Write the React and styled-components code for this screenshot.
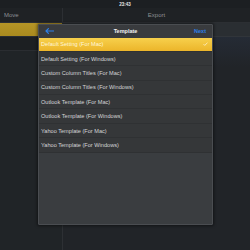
import React from 'react';
import styled, { createGlobalStyle } from 'styled-components';

const templates = [
  'Default Setting (For Mac)',
  'Default Setting (For Windows)',
  'Custom Column Titles (For Mac)',
  'Custom Column Titles (For Windows)',
  'Outlook Template (For Mac)',
  'Outlook Template (For Windows)',
  'Yahoo Template (For Mac)',
  'Yahoo Template (For Windows)',
];

function App() {
  return (
    <>
      <GlobalStyle />
      <Screen>
        <StatusBar>23:43</StatusBar>
        <TopNav>
          <NavCell>Move</NavCell>
          <NavCell center>Export</NavCell>
        </TopNav>
        <Body>
          <Sidebar>
            <SideItem active />
            <SideItem />
          </Sidebar>
          <Pane>
            <PaneBand />
            <PaneGlow />
          </Pane>
        </Body>

        <Modal>
          <ModalHeader>
            <BackButton>
              <svg width="9" height="6" viewBox="0 0 9 6">
                <path d="M8.5 3H1M3.4 0.6L1 3l2.4 2.4" stroke="#2d7fe6" strokeWidth="1.2" fill="none" strokeLinecap="round" strokeLinejoin="round" />
              </svg>
            </BackButton>
            <Title>Template</Title>
            <NextButton>Next</NextButton>
          </ModalHeader>
          <List>
            {templates.map((t, i) => (
              <Row key={t} selected={i === 0}>
                <span>{t}</span>
                {i === 0 && (
                  <svg width="5" height="4" viewBox="0 0 5 4">
                    <path d="M0.5 2.1l1.3 1.3L4.5 0.6" stroke="rgba(255,255,255,0.75)" strokeWidth="0.8" fill="none" />
                  </svg>
                )}
              </Row>
            ))}
          </List>
        </Modal>
      </Screen>
    </>
  );
}

const GlobalStyle = createGlobalStyle`
  html, body {
    margin: 0;
    padding: 0;
    background: #202326;
  }
  body {
    font-family: "Liberation Sans", Arial, sans-serif;
  }
`;

const Screen = styled.div`
  position: relative;
  width: 250px;
  height: 250px;
  overflow: hidden;
  background: #202326;
  display: flex;
  flex-direction: column;
`;

const StatusBar = styled.div`
  height: 8px;
  display: flex;
  align-items: center;
  justify-content: center;
  font-size: 4.5px;
  font-weight: bold;
  color: #e8e8e8;
  background: #1c1f22;
`;

const TopNav = styled.div`
  height: 14px;
  display: grid;
  grid-template-columns: 63px 1fr;
  background: #1f2225;
  border-bottom: 1px solid #2c2f33;
`;

const NavCell = styled.div`
  display: flex;
  align-items: center;
  justify-content: ${(p) => (p.center ? 'center' : 'flex-start')};
  padding-left: ${(p) => (p.center ? '0' : '4px')};
  font-size: 6px;
  color: #8d9094;
  border-right: ${(p) => (p.center ? 'none' : '1px solid #2c2f33')};
`;

const Body = styled.div`
  flex: 1;
  display: grid;
  grid-template-columns: 63px 1fr;
`;

const Sidebar = styled.div`
  display: flex;
  flex-direction: column;
  background: #202427;
  border-right: 1px solid #2d3034;
`;

const SideItem = styled.div`
  height: 13px;
  background: ${(p) => (p.active ? 'linear-gradient(#b59526, #a98a1f)' : '#1c1f22')};
  border-bottom: 1px solid #2a2d31;
`;

const Pane = styled.div`
  display: flex;
  flex-direction: column;
  background: #212428;
`;

const PaneBand = styled.div`
  height: 13px;
  background: #2a2e32;
  border-bottom: 1px solid #31353a;
`;

const PaneGlow = styled.div`
  height: 30px;
  background: linear-gradient(#252b35, #212428);
`;

const Modal = styled.div`
  position: absolute;
  left: 38px;
  top: 24px;
  width: 175px;
  height: 201px;
  background: #3a3d40;
  border: 1px solid #4a4d51;
  border-radius: 1px;
  box-sizing: border-box;
  box-shadow: 0 0 3px 1px rgba(0, 0, 0, 0.45);
  display: flex;
  flex-direction: column;
  overflow: hidden;
`;

const ModalHeader = styled.div`
  height: 12.5px;
  display: grid;
  grid-template-columns: 1fr auto 1fr;
  align-items: center;
  padding: 0 6px;
  background: #393b3e;
`;

const BackButton = styled.div`
  display: flex;
  align-items: center;
`;

const Title = styled.div`
  font-size: 5.5px;
  font-weight: bold;
  color: #f0f0f0;
`;

const NextButton = styled.div`
  justify-self: end;
  font-size: 5.5px;
  font-weight: bold;
  color: #2d7fe6;
`;

const List = styled.div`
  display: flex;
  flex-direction: column;
`;

const Row = styled.div`
  height: 14.4px;
  box-sizing: border-box;
  display: flex;
  align-items: center;
  justify-content: space-between;
  padding: 0 4px 0 2px;
  font-size: 5.6px;
  color: ${(p) => (p.selected ? '#fff6d8' : '#d4d5d7')};
  background: ${(p) => (p.selected ? 'linear-gradient(#f7d04c, #ecb52a)' : '#353739')};
  border-bottom: 1px solid #2f3133;
`;

export default App;
